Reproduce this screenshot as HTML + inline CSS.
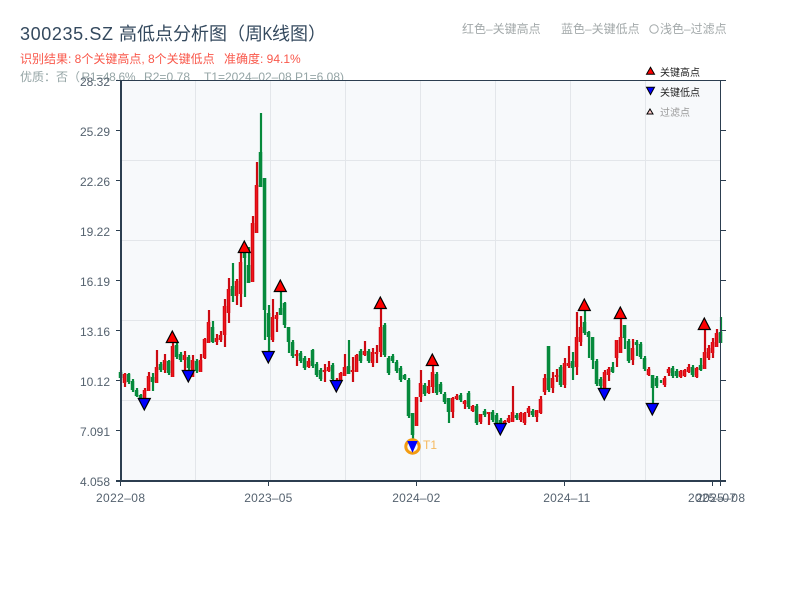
<!DOCTYPE html>
<html><head><meta charset="utf-8"><style>
html,body{margin:0;padding:0;background:#fff;width:800px;height:600px;overflow:hidden}
svg{display:block}
text{font-family:"Liberation Sans","Noto Sans CJK SC",sans-serif}
</style></head><body>
<svg width="800" height="600" viewBox="0 0 800 600" xmlns="http://www.w3.org/2000/svg">
<rect width="800" height="600" fill="#fff"/>
<text x="20" y="40" font-size="18" fill="#34495e" textLength="93">300235.SZ</text>
<text x="119" y="40" font-size="18" fill="#34495e">高低点分析图（周</text>
<text x="262.500" y="40" font-size="18" fill="#34495e" textLength="10" lengthAdjust="spacingAndGlyphs">K</text>
<text x="272" y="40" font-size="18" fill="#34495e">线图）</text>
<text x="20" y="63" font-size="12" fill="#f9584b">识别结果: 8个关键高点, 8个关键低点</text>
<text x="224" y="63" font-size="12" fill="#f9584b">准确度: 94.1%</text>
<text x="20" y="81" font-size="12" fill="#95a5a6">优质：否（</text>
<text x="81.500" y="81" font-size="12" fill="#95a5a6" textLength="54">R1=48.6%</text>
<text x="144" y="81" font-size="12" fill="#95a5a6" textLength="46">R2=0.78</text>
<text x="204" y="81" font-size="12" fill="#95a5a6" textLength="140">T1=2024–02–08 P1=6.08)</text>
<text x="462" y="33" font-size="12" fill="#a3a9aa">红色–关键高点</text>
<text x="561" y="33" font-size="12" fill="#a3a9aa">蓝色–关键低点</text>
<circle cx="654" cy="29" r="4.200" fill="none" stroke="#a3a9aa" stroke-width="1"/>
<text x="660" y="33" font-size="12" fill="#a3a9aa">浅色–过滤点</text>

<rect x="121" y="80" width="600" height="401" fill="#f7f9fb"/>
<path d="M195.500 81V481M270.500 81V481M345.500 81V481M420.500 81V481M495.500 81V481M570.500 81V481M645.500 81V481M121 160.500H721M121 240.500H721M121 320.500H721M121 400.500H721" stroke="#e3e6ea" stroke-width="1" fill="none"/>

<!-- red candles -->
<defs><path id="rw" d="M125 373V387M145 388V399M149 372V391M157 350V383M165 354V373M173 342V377M185 351V370M193 355V377M201 354V372M205 338V359M209 310V343M217 334V345M221 331V342M225 299V347M229 278V323M237 279V305M241 253V307M253 216V282M257 162V233M273 299V342M277 312V332M297 350V366M309 358V368M325 364V382M329 361V372M337 378V382M341 372V380M345 354V376M353 357V382M357 354V372M365 341V356M373 348V367M377 345V363M381 308V357M417 397V426M421 370V402M429 380V394M433 366V393M453 397V418M457 394V400M465 400V409M473 405V412M481 414V424M489 412V425M505 420V425M509 415V423M513 386V422M521 412V422M525 412V425M529 406V417M537 410V422M541 396V414M545 374V395M553 372V393M557 369V382M565 358V388M569 346V368M577 312V375M581 316V346M605 370V388M609 367V381M617 340V367M621 318V353M633 339V365M649 367V376M665 376V387M669 367V376M681 370V378M685 369V377M689 364V373M697 367V378M705 330V369M709 345V360M713 338V358M717 329V347"/>
<path id="rb" d="M124.500 374V383M144.500 390V399M148.500 376V391M156.500 367V383M164.500 360V370M172.500 346V377M184.500 355V360M192.500 360V377M200.500 360V372M204.500 339V358M208.500 322V343M216.500 338V342M220.500 335V340M224.500 306V335M228.500 289V313M236.500 281V296M240.500 262V294M252.500 223V282M256.500 185V233M272.500 317V340M276.500 315V319M296.500 354V356M308.500 361V367M324.500 370V372M328.500 367V371M340.500 373V380M344.500 367V376M352.500 370V372M356.500 355V372M364.500 351V355M372.500 352V363M376.500 352V354M380.500 327V352M416.500 397V426M420.500 383V397M428.500 386V393M432.500 372V387M452.500 398V412M456.500 396V399M464.500 401V404M472.500 406V411M480.500 414V422M488.500 412V414M504.500 421V424M508.500 418V422M512.500 412V422M520.500 413V420M524.500 413V423M528.500 408V413M536.500 410V417M540.500 399V413M544.500 378V392M552.500 378V388M556.500 375V377M564.500 363V385M568.500 363V366M576.500 337V367M580.500 327V342M604.500 372V388M608.500 369V375M616.500 340V358M620.500 337V353M632.500 348V360M648.500 369V375M664.500 378V385M668.500 369V373M680.500 371V377M684.500 370V376M688.500 367V372M696.500 368V377M704.500 352V369M708.500 348V358M712.500 342V353M716.500 333V347"/></defs>
<use href="#rw" stroke="#cc0a12" stroke-width="2.200" fill="none"/>
<use href="#rb" stroke="#d0060f" stroke-width="3.500" fill="none"/>
<use href="#rb" stroke="#f0141c" stroke-width="1.500" fill="none"/>

<!-- green candles -->
<path d="M121 370V380M129 373V384M133 379V392M137 388V397M141 394V400M153 373V391M161 362V372M169 360V375M177 343V359M181 352V362M189 355V370M197 359V373M213 321V343M233 263V302M245 253V297M249 247V283M261 113V187M265 178V340M269 305V352M281 292V315M285 302V328M289 327V353M293 340V358M301 351V363M305 356V370M313 349V368M317 362V377M321 368V381M333 363V381M349 340V374M361 349V363M369 349V363M385 323V357M389 356V375M393 354V363M397 360V373M401 366V382M405 374V380M409 378V418M413 413V447M425 383V396M437 372V395M441 382V394M445 392V404M449 398V423M461 393V402M469 391V409M477 404V425M485 409V417M493 410V422M497 413V425M501 418V430M517 413V420M533 409V417M549 346V392M561 365V387M573 352V380M585 308V335M589 331V358M593 337V369M597 359V386M601 377V388M613 362V373M625 325V349M629 339V363M637 340V356M641 342V359M645 356V371M653 375V403M657 376V388M661 380V383M673 366V378M677 369V378M693 365V377M701 358V371M721 317V343" stroke="#068a3c" stroke-width="2.200" fill="none"/>
<path d="M120.500 372V378M128.500 374V382M132.500 381V390M136.500 390V396M140.500 395V399M152.500 377V382M160.500 364V370M168.500 361V373M176.500 345V357M180.500 354V360M188.500 357V368M196.500 361V371M212.500 327V342M232.500 286V296M244.500 253V258M248.500 265V283M260.500 152V187M264.500 178V310M268.500 313V337M280.500 308V315M284.500 303V325M288.500 327V342M292.500 342V356M300.500 353V361M304.500 358V368M312.500 350V366M316.500 364V375M320.500 370V379M332.500 365V379M348.500 366V374M360.500 351V361M368.500 351V361M384.500 325V355M388.500 358V373M392.500 356V361M396.500 362V371M400.500 368V380M404.500 375V379M408.500 380V416M412.500 413V435M424.500 385V394M436.500 374V393M440.500 384V392M444.500 394V402M448.500 398V412M460.500 395V400M468.500 393V407M476.500 406V423M484.500 411V415M492.500 412V420M496.500 415V423M500.500 420V428M516.500 415V418M532.500 411V415M548.500 346V390M560.500 367V385M572.500 361V368M584.500 322V333M588.500 332V337M592.500 337V360M596.500 361V384M600.500 379V386M612.500 367V372M624.500 325V338M628.500 341V361M636.500 342V345M640.500 344V357M644.500 358V369M652.500 375V388M656.500 378V386M672.500 368V376M676.500 371V376M692.500 367V375M700.500 365V370M720.500 332V343" stroke="#068a3c" stroke-width="3.500" fill="none"/>

<!-- T1 circle -->
<circle cx="412.500" cy="446.500" r="6.700" fill="none" stroke="#f39c12" stroke-width="3"/>
<text x="423" y="449" font-size="12" fill="#f5b95f">T1</text>

<!-- high markers -->
<g fill="#f00" stroke="#000" stroke-width="1.200">
<path d="M172.300 331L178.300 342.500H166.300Z"/>
<path d="M244.300 241L250.300 252.500H238.300Z"/>
<path d="M280.300 280L286.300 291.500H274.300Z"/>
<path d="M380.300 297L386.300 308.500H374.300Z"/>
<path d="M432.300 354L438.300 365.500H426.300Z"/>
<path d="M584.300 299L590.300 310.500H578.300Z"/>
<path d="M620.300 307L626.300 318.500H614.300Z"/>
<path d="M704.300 318L710.300 329.500H698.300Z"/>
</g>
<!-- low markers -->
<g fill="#00f" stroke="#000" stroke-width="1.200">
<path d="M138.300 398.500H150.300L144.300 410Z"/>
<path d="M182.300 370.500H194.300L188.300 382Z"/>
<path d="M262.300 351.500H274.300L268.300 363Z"/>
<path d="M330.300 380.500H342.300L336.300 392Z"/>
<path d="M494.300 423.500H506.300L500.300 435Z"/>
<path d="M598.300 388.500H610.300L604.300 400Z"/>
<path d="M646.300 403.500H658.300L652.300 415Z"/>
</g>
<path d="M408 441.500H417L412.500 451.500Z" fill="#00f" stroke="#00f" stroke-width="1"/>

<!-- axes -->
<path d="M116 80.500H726M720.500 80V481M116 130.500H121M116 180.500H121M116 230.500H121M116 280.500H121M116 330.500H121M116 380.500H121M116 430.500H121M721 130.500H726M721 180.500H726M721 230.500H726M721 280.500H726M721 330.500H726M721 380.500H726M721 430.500H726" stroke="#2c3e50" stroke-width="1" fill="none"/>
<path d="M116 481H726" stroke="#2c3e50" stroke-width="2" fill="none"/>
<path d="M121 80V482" stroke="#2c3e50" stroke-width="2" fill="none"/>
<path d="M120.500 482V486M268.500 482V486M416.500 482V486M564.500 482V486M712.500 482V486M720.500 482V486" stroke="#2c3e50" stroke-width="1" fill="none"/>

<g font-size="12" fill="#55626f" text-anchor="end">
<text x="110" y="86">28.32</text>
<text x="110" y="136">25.29</text>
<text x="110" y="186">22.26</text>
<text x="110" y="236">19.22</text>
<text x="110" y="286">16.19</text>
<text x="110" y="336">13.16</text>
<text x="110" y="386">10.12</text>
<text x="110" y="436">7.091</text>
<text x="110" y="486">4.058</text>
</g>
<g font-size="12" fill="#55626f">
<text x="96" y="502" textLength="49">2022–08</text>
<text x="244.300" y="502" textLength="48">2023–05</text>
<text x="392.300" y="502" textLength="48">2024–02</text>
<text x="543.300" y="502" textLength="47">2024–11</text>
<text x="688" y="502" textLength="48">2025–07</text>
<text x="696" y="502" textLength="49">2025–08</text>
</g>

<!-- chart legend -->
<path d="M650.500 67.200L654.500 74.200H646.500Z" fill="#f00" stroke="#000" stroke-width="1"/>
<path d="M646.500 87.200H654.500L650.500 94.600Z" fill="#00f" stroke="#000" stroke-width="1"/>
<path d="M650 109L653 114H647Z" fill="#fcc" stroke="#000" stroke-width="1"/>
<text x="660" y="76" font-size="10" fill="#222">关键高点</text>
<text x="660" y="96" font-size="10" fill="#222">关键低点</text>
<text x="660" y="116" font-size="10" fill="#999">过滤点</text>
</svg>
</body></html>
